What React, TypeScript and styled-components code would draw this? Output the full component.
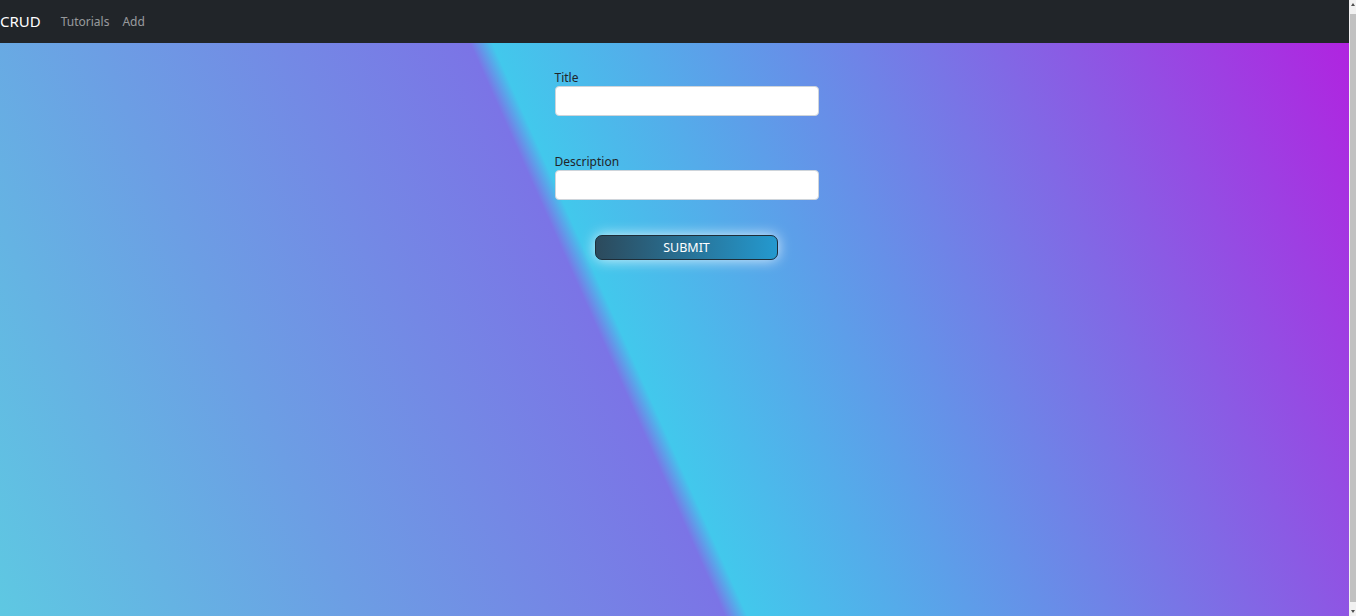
import React, { useState } from 'react';
import styled, { createGlobalStyle } from 'styled-components';

const GlobalStyle = createGlobalStyle`
  html, body {
    margin: 0;
    padding: 0;
    height: 100%;
    overflow: hidden;
  }
  body {
    font-family: 'Noto Sans', 'Open Sans', sans-serif;
    color: #212529;
  }
`;

const Shell = styled.div`
  display: flex;
  height: 100vh;
`;

const Content = styled.div`
  flex: 1;
  display: flex;
  flex-direction: column;
  min-width: 0;
`;

const Navbar = styled.nav`
  display: flex;
  align-items: center;
  flex: 0 0 43px;
  background: #212529;
  box-sizing: border-box;
`;

const Brand = styled.a`
  color: #fff;
  font-size: 15px;
  text-decoration: none;
  margin-right: 20px;
  line-height: 1;
`;

const NavLinks = styled.div`
  display: flex;
  gap: 13px;
`;

const NavLink = styled.a`
  color: rgba(255, 255, 255, 0.55);
  font-size: 12px;
  text-decoration: none;
`;

const Main = styled.main`
  flex: 1;
  background: linear-gradient(
    66deg,
    #5ec8e2 0%,
    #6c9ee4 22%,
    #7b74e6 45.2%,
    #42c8ec 46.6%,
    #6690e8 65%,
    #b024e0 100%
  );
  display: flex;
  justify-content: center;
  padding-left: 24px;
  box-sizing: border-box;
`;

const Form = styled.form`
  width: 264px;
  padding-top: 27px;
  display: flex;
  flex-direction: column;
`;

const Field = styled.div<{ $last?: boolean }>`
  display: flex;
  flex-direction: column;
  margin-bottom: ${(p) => (p.$last ? '35px' : '38px')};
`;

const Label = styled.label`
  font-size: 12px;
  line-height: 16px;
  color: #212529;
`;

const Input = styled.input`
  height: 30px;
  box-sizing: border-box;
  border: 1px solid #ced4da;
  border-radius: 4px;
  background: #fff;
  padding: 4px 8px;
  font-size: 13px;
  outline: none;
`;

const SubmitButton = styled.button`
  align-self: center;
  width: 183px;
  height: 25px;
  border: 1px solid #1e2d38;
  border-radius: 7px;
  background: linear-gradient(to right, #2c4a5c, #2499cf);
  box-shadow: 0 0 14px rgba(255, 255, 255, 0.8);
  color: #fff;
  font-family: 'Noto Sans', 'Open Sans', sans-serif;
  font-size: 12.5px;
  text-transform: uppercase;
  cursor: pointer;
  padding: 0;
`;

const ScrollTrack = styled.div`
  flex: 0 0 7px;
  background: #f1f1f1;
  display: flex;
  flex-direction: column;
  align-items: flex-end;
  padding: 3px 0;
  box-sizing: border-box;
`;

const Arrow = styled.div<{ $down?: boolean }>`
  width: 0;
  height: 0;
  margin-right: 1px;
  border-left: 2.5px solid transparent;
  border-right: 2.5px solid transparent;
  ${(p) => (p.$down ? 'border-top: 3px solid #505050;' : 'border-bottom: 3px solid #505050;')}
`;

const Thumb = styled.div`
  flex: 1;
  width: 6px;
  margin: 8px 0;
  background: #c1c1c1;
`;

const App: React.FC = () => {
  const [title, setTitle] = useState('');
  const [description, setDescription] = useState('');

  return (
    <Shell>
      <GlobalStyle />
      <Content>
        <Navbar>
          <Brand href="#">CRUD</Brand>
          <NavLinks>
            <NavLink href="#">Tutorials</NavLink>
            <NavLink href="#">Add</NavLink>
          </NavLinks>
        </Navbar>
        <Main>
          <Form onSubmit={(e) => e.preventDefault()}>
            <Field>
              <Label htmlFor="title">Title</Label>
              <Input id="title" value={title} onChange={(e) => setTitle(e.target.value)} />
            </Field>
            <Field $last>
              <Label htmlFor="description">Description</Label>
              <Input
                id="description"
                value={description}
                onChange={(e) => setDescription(e.target.value)}
              />
            </Field>
            <SubmitButton type="submit">Submit</SubmitButton>
          </Form>
        </Main>
      </Content>
      <ScrollTrack>
        <Arrow />
        <Thumb />
        <Arrow $down />
      </ScrollTrack>
    </Shell>
  );
};

export default App;
